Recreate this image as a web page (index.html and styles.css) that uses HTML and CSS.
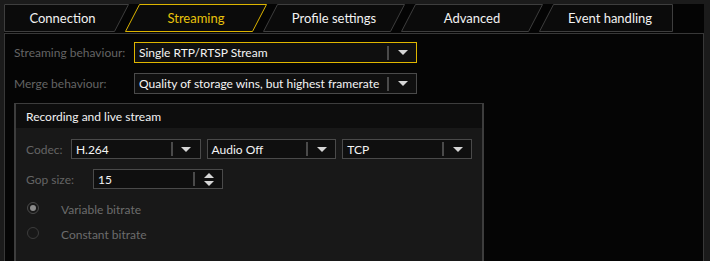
FILE: index.html
```html
<!DOCTYPE html>
<html lang="en">
<head>
    <meta charset="UTF-8">
    <title>Camera settings - Streaming</title>
    <link rel="stylesheet" href="styles.css">
</head>
<body>
    <div class="window">
        <!-- Tab strip -->
        <nav class="tabs">
            <div class="tab tab-first">
                <svg class="tab-shape" width="125" height="28" viewBox="0 0 125 28"><polygon points="0.5,0.5 124.5,0.5 110.5,27.5 0.5,27.5"/></svg>
                <span>Connection</span>
            </div>
            <div class="tab active">
                <svg class="tab-shape" width="142" height="28" viewBox="0 0 142 28"><polygon points="14.5,0.5 141.5,0.5 127.5,27.5 0.5,27.5"/></svg>
                <span>Streaming</span>
            </div>
            <div class="tab">
                <svg class="tab-shape" width="142" height="28" viewBox="0 0 142 28"><polygon points="14.5,0.5 141.5,0.5 127.5,27.5 0.5,27.5"/></svg>
                <span>Profile settings</span>
            </div>
            <div class="tab">
                <svg class="tab-shape" width="142" height="28" viewBox="0 0 142 28"><polygon points="14.5,0.5 141.5,0.5 127.5,27.5 0.5,27.5"/></svg>
                <span>Advanced</span>
            </div>
            <div class="tab tab-last">
                <svg class="tab-shape" width="134" height="28" viewBox="0 0 134 28"><polygon points="14.5,0.5 133.5,0.5 133.5,27.5 0.5,27.5"/></svg>
                <span>Event handling</span>
            </div>
        </nav>

        <!-- Streaming page -->
        <section class="panel">
            <div class="row">
                <span class="label">Streaming behaviour:</span>
                <div class="select wide focused">
                    <span class="value">Single RTP/RTSP Stream</span>
                    <span class="caret"></span>
                </div>
            </div>
            <div class="row">
                <span class="label">Merge behaviour:</span>
                <div class="select wide">
                    <span class="value">Quality of storage wins, but highest framerate</span>
                    <span class="caret"></span>
                </div>
            </div>

            <div class="group">
                <div class="group-title">Recording and live stream</div>
                <div class="group-body">
                    <div class="row small">
                        <span class="label codec-label">Codec:</span>
                        <div class="select narrow">
                            <span class="value">H.264</span>
                            <span class="caret"></span>
                        </div>
                        <div class="select narrow">
                            <span class="value">Audio Off</span>
                            <span class="caret"></span>
                        </div>
                        <div class="select narrow">
                            <span class="value">TCP</span>
                            <span class="caret"></span>
                        </div>
                    </div>
                    <div class="row small">
                        <span class="label gop-label">Gop size:</span>
                        <div class="select narrow spin">
                            <span class="value">15</span>
                            <span class="spin-buttons"><i class="arrow-up"></i><i class="arrow-down"></i></span>
                        </div>
                    </div>
                    <div class="radio-row first">
                        <span class="radio checked"></span>
                        <span class="radio-label">Variable bitrate</span>
                    </div>
                    <div class="radio-row">
                        <span class="radio"></span>
                        <span class="radio-label">Constant bitrate</span>
                    </div>
                </div>
            </div>
        </section>
    </div>
</body>
</html>
```

FILE: styles.css
```css
/* General Reset */
* {
    margin: 0;
    padding: 0;
    box-sizing: border-box;
}

body, html {
    height: 100%;
    overflow: hidden;
    font-family: Lato, 'Segoe UI', 'Liberation Sans', sans-serif;
    font-size: 12px;
    background-color: #1b1b1b;
    color: #f0f0f0;
}

.window {
    display: flex;
    flex-direction: column;
    height: 100vh;
    padding: 4px 6px 0 4px;
}

/* Tab strip */
.tabs {
    display: flex;
    align-items: flex-start;
    height: 29px;
    background-color: #040404;
}

.tab {
    position: relative;
    display: flex;
    align-items: center;
    justify-content: center;
    width: 142px;
    height: 28px;
    margin-left: -4px;
    font-size: 13px;
    color: #f2f2f2;
}

.tab-first {
    width: 125px;
    margin-left: 0;
    padding-right: 8px;
}

.tab-last {
    width: 134px;
    padding-left: 8px;
}

.tab-shape {
    position: absolute;
    top: 0;
    left: 0;
}

.tab-shape polygon {
    fill: #0b0b0b;
    stroke: #3e3e3e;
    stroke-width: 1;
}

.tab span {
    position: relative;
}

.tab.active {
    color: #e8c20c;
}

.tab.active .tab-shape polygon {
    stroke: #dcb400;
}

/* Page panel */
.panel {
    flex: 1;
    display: flex;
    flex-direction: column;
    align-items: flex-start;
    background-color: #050505;
    border: 1px solid #383838;
    border-bottom: none;
    padding: 8px 9px 0 9px;
}

.row {
    display: flex;
    align-items: center;
    height: 21px;
}

.row + .row {
    margin-top: 10px;
}

.label {
    width: 120px;
    color: #646464;
}

/* Combo boxes */
.select {
    display: flex;
    align-items: center;
    height: 21px;
    background-color: #0f0f0f;
    border: 1px solid #4a4a4a;
    color: #f4f4f4;
}

.select.wide {
    width: 283px;
}

.select.focused {
    border-color: #dfb600;
}

.select .value {
    flex: 1;
    padding-left: 4px;
    white-space: nowrap;
    overflow: hidden;
}

.caret {
    display: flex;
    align-items: center;
    justify-content: center;
    width: 29px;
    height: 14px;
    border-left: 2px solid #4a4a4a;
}

.caret::after {
    content: "";
    border-left: 5px solid transparent;
    border-right: 5px solid transparent;
    border-top: 5px solid #d6d6d6;
}

/* Group box */
.group {
    flex: 1;
    width: 470px;
    margin-top: 9px;
    background-color: #181818;
    border: 2px solid #3d3d3d;
    border-top-width: 1px;
    border-bottom: none;
}

.group-title {
    display: flex;
    align-items: center;
    height: 24px;
    padding-left: 10px;
    background-color: #0d0d0d;
    color: #f2f2f2;
}

.group-body {
    padding: 11px 10px 0 10px;
}

.row.small {
    height: 20px;
    gap: 6px;
}

.row.small .select {
    height: 20px;
}

.select.narrow {
    width: 130px;
}

.codec-label {
    width: 39px;
}

.gop-label {
    width: 61px;
}

/* Spin box */
.spin-buttons {
    display: flex;
    flex-direction: column;
    align-items: center;
    justify-content: center;
    gap: 3px;
    width: 29px;
    height: 14px;
    border-left: 2px solid #4a4a4a;
}

.arrow-up,
.arrow-down {
    display: block;
    border-left: 5px solid transparent;
    border-right: 5px solid transparent;
}

.arrow-up {
    border-bottom: 5px solid #d6d6d6;
}

.arrow-down {
    border-top: 5px solid #d6d6d6;
}

/* Radio buttons */
.radio-row {
    display: flex;
    align-items: center;
    height: 25px;
    padding-left: 1px;
}

.radio-row.first {
    margin-top: 6px;
}

.radio {
    display: flex;
    align-items: center;
    justify-content: center;
    width: 12px;
    height: 12px;
    border: 1px solid #3c3c3c;
    border-radius: 50%;
}

.radio.checked {
    border-color: #4a4a4a;
}

.radio.checked::after {
    content: "";
    width: 6px;
    height: 6px;
    border-radius: 50%;
    background-color: #8c8c8c;
}

.radio-label {
    margin-left: 22px;
    padding-top: 4px;
    color: #6c6c6c;
}
```
